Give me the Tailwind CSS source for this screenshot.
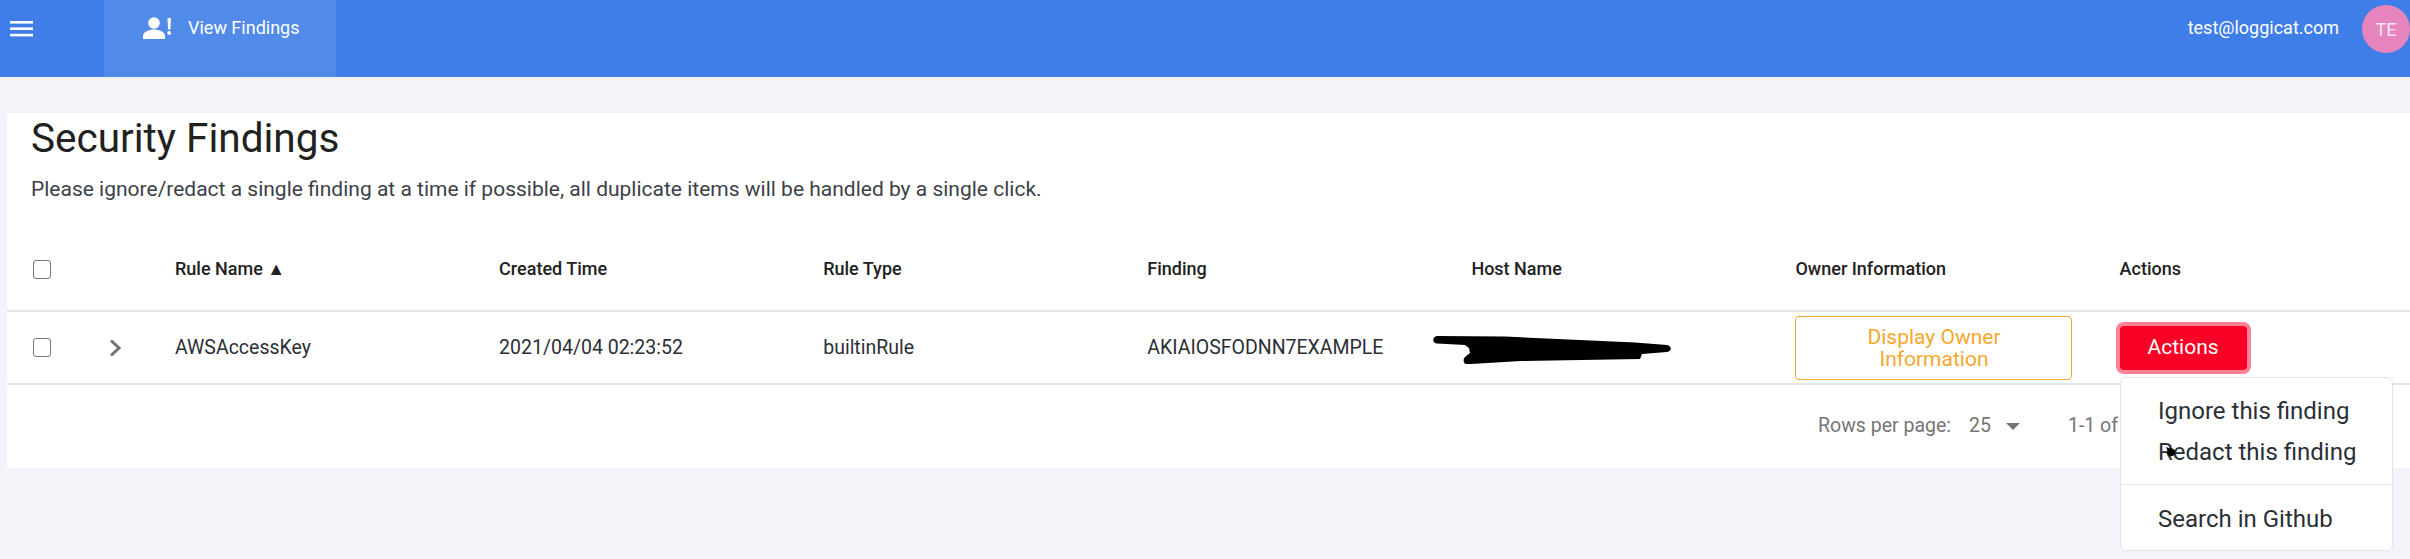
<!DOCTYPE html>
<html lang="en">
<head>
  <meta charset="UTF-8" />
  <title>Security Findings</title>
  <script src="https://cdn.jsdelivr.net/npm/@tailwindcss/browser@4"></script>
</head>
<body class="bg-[#f2f4f9] font-[Roboto,sans-serif] h-[559px] overflow-hidden">

  <!-- Top bar -->
  <header class="h-[77px] bg-[#3f7ee8] flex text-white">
    <div class="w-[104px] pl-[10px] pt-[21px]">
      <svg width="23" height="16" viewBox="0 0 23 16" fill="#fff"><rect y="0" width="23" height="2.6"/><rect y="6.4" width="23" height="2.6"/><rect y="12.8" width="23" height="2.6"/></svg>
    </div>
    <div class="w-[232px] bg-[#528aea] flex items-start pl-[39px] pt-[17px] gap-[16px]">
      <svg width="29" height="22" viewBox="0 0 29 22" fill="#fff">
        <circle cx="11" cy="6" r="5.8"/>
        <path d="M0 22v-3c0-4 6-6.4 11-6.4s11 2.400 11 6.400v3z"/>
        <path d="M24.500 1h3.400l-.5 11.500h-2.400z"/>
        <circle cx="26.200" cy="16" r="1.900"/>
      </svg>
      <span class="text-[18px] leading-[22px]">View Findings</span>
    </div>
    <div class="ml-auto flex items-start pt-[5px] gap-[23px]">
      <span class="text-[18px] leading-[46px]">test@loggicat.com</span>
      <div class="w-[48px] h-[48px] rounded-full bg-[#e684bd] flex items-center justify-center text-[18px] text-white/80">TE</div>
    </div>
  </header>

  <main class="pt-[36px] pl-[7px]">
    <section class="relative bg-white h-[355px]">
      <div class="pl-[24px]">
        <h1 class="text-[40.500px] leading-[46px] pt-[2px] text-[#212121]">Security Findings</h1>
        <p class="mt-[16px] text-[21px] leading-[24px] text-[#3c4148]">Please ignore/redact a single finding at a time if possible, all duplicate items will be handled by a single click.</p>
      </div>

      <!-- Table head -->
      <div class="mt-[30px] h-[81px] border-b-2 border-[#e4e4e6] grid grid-cols-[168px_repeat(6,324.100px)_1fr] text-[18px] font-medium text-[#212121] leading-[22px] pt-[27px]">
        <div class="pl-[26px]">
          <div class="w-[18px] h-[19px] mt-[2px] rounded-[3px] border border-[#777] bg-white"></div>
        </div>
        <div>Rule Name <span class="text-[18px]">▲</span></div>
        <div>Created Time</div>
        <div>Rule Type</div>
        <div>Finding</div>
        <div>Host Name</div>
        <div>Owner Information</div>
        <div>Actions</div>
      </div>

      <!-- Row -->
      <div class="h-[73px] border-b-2 border-[#e4e4e6] grid grid-cols-[168px_repeat(6,324.100px)_1fr] items-center text-[19.500px] text-[#2b2f36]">
        <div class="pl-[26px] flex items-center">
          <div class="w-[18px] h-[19px] rounded-[3px] border border-[#777] bg-white"></div>
          <svg class="ml-[58px]" width="12" height="18" viewBox="0 0 12 18" fill="none" stroke="#757575" stroke-width="3"><path d="M2 1.500l8 7.500-8 7.500"/></svg>
        </div>
        <div>AWSAccessKey</div>
        <div>2021/04/04 02:23:52</div>
        <div>builtinRule</div>
        <div>AKIAIOSFODNN7EXAMPLE</div>
        <div>
          <svg class="-ml-[40px]" width="242" height="32" viewBox="0 0 242 32" fill="#000">
            <path d="M6 4L74 4.500 204 10.500 236 13C241 14 241 19 236 20L211 22 209 27 90 29 40 32 35 32C32 31 32 27 34 25L39 21 38 16 34 13 6 11.500C1 11 1 5 6 4z"/>
          </svg>
        </div>
        <div>
          <button class="w-[277px] h-[64px] rounded-[4px] border border-[#f9a62c] text-[#f9a62c] text-[21px] leading-[22px] px-[40px]">Display Owner Information</button>
        </div>
        <div>
          <button class="w-[127px] h-[44px] rounded-[4px] bg-[#f90026] ring-4 ring-[#fb8296] text-white text-[21px]">Actions</button>
        </div>
      </div>

      <!-- Pagination -->
      <div class="h-[83px] flex items-start pt-[29px] pl-[1811px] text-[19.500px] leading-[24px] text-[#757575]">
        <span>Rows per page:</span>
        <span class="ml-[18px]">25</span>
        <svg class="ml-[15px] mt-[9px]" width="14" height="7" viewBox="0 0 14 7" fill="#757575"><path d="M0 0h14l-7 7z"/></svg>
        <span class="ml-[48px]">1-1 of 1</span>
      </div>

      <!-- Actions menu -->
      <div class="absolute left-[2113px] top-[264px] w-[273px] h-[174px] bg-white rounded-[6px] border border-[#e3e3e8] text-[24px] leading-[30px] text-[#2b2f36]">
        <div class="pt-[18px] pl-[37px] flex flex-col gap-[11px]">
          <div>Ignore this finding</div>
          <div class="relative">
            Redact this finding
            <svg class="absolute left-[7px] top-[9px]" width="12" height="12" viewBox="0 0 12 12" fill="#000"><path d="M1 1l4 1.500a4 4 0 1 1-2.500 2.500z"/></svg>
          </div>
        </div>
        <div class="mt-[17px] border-t border-[#e3e3e8] pt-[19px] pl-[37px]">Search in Github</div>
      </div>
    </section>
  </main>
</body>
</html>
